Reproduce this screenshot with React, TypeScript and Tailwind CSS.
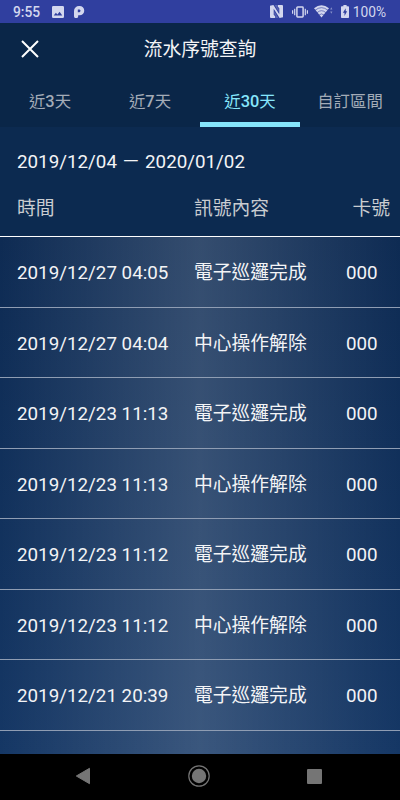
import { useState } from "react";

const tabs = [
  { before: "近", days: "3", after: "天" },
  { before: "近", days: "7", after: "天" },
  { before: "近", days: "30", after: "天" },
  { before: "自訂區間", days: "", after: "" },
];

const records = [
  { time: "2019/12/27 04:05", content: "電子巡邏完成", card: "000" },
  { time: "2019/12/27 04:04", content: "中心操作解除", card: "000" },
  { time: "2019/12/23 11:13", content: "電子巡邏完成", card: "000" },
  { time: "2019/12/23 11:13", content: "中心操作解除", card: "000" },
  { time: "2019/12/23 11:12", content: "電子巡邏完成", card: "000" },
  { time: "2019/12/23 11:12", content: "中心操作解除", card: "000" },
  { time: "2019/12/21 20:39", content: "電子巡邏完成", card: "000" },
];

function StatusBar() {
  return (
    <div className="flex h-[23px] shrink-0 items-center bg-[#303f9f] pt-[2px] pr-[14px] pl-[13px] text-[#d3d7ee]">
      <span className="w-[39px] text-[13.8px] leading-none font-medium">9:55</span>
      {/* picture */}
      <svg width="12" height="12" viewBox="0 0 12 12" className="-mt-[1px] mr-[10px]">
        <path fill="currentColor" fillRule="evenodd" d="M1.3 0h9.4A1.3 1.3 0 0 1 12 1.3v9.4a1.3 1.3 0 0 1-1.3 1.3H1.3A1.3 1.3 0 0 1 0 10.7V1.3A1.3 1.3 0 0 1 1.3 0ZM1.7 9.5h8.6L7.6 5.8 5.4 8.5 3.9 6.7Z" />
      </svg>
      {/* parking style app mark */}
      <svg width="11" height="12" viewBox="0 0 11 12" className="-mt-[1px]">
        <path fill="currentColor" fillRule="evenodd" d="M0 5A5 5 0 0 1 5 0H5.6A4.6 4.6 0 0 1 5.6 9.3H4.2V10.3A2.1 1.9 0 0 1 0 10.3ZM3.8 3.5V6.2H5.5A1.4 1.4 0 0 0 5.5 3.5Z" />
      </svg>
      <div className="ml-auto flex items-center">
        {/* nfc */}
        <svg width="13" height="13" viewBox="0 0 13 13" className="-mt-[1px] mr-[9px]">
          <path d="M0 .8L3.4 0 9.3 9.3V3.2L7.8 1.8V0H12A1 1 0 0 1 13 1V12.2L9.6 13 3.7 3.7V9.8L5.2 11.2V13H1A1 1 0 0 1 0 12Z" fill="currentColor" />
          <path d="M4.6 0H7.2V2.2L8.7 3.6V7ZM8.4 13H5.8V10.8L4.3 9.4V6Z" fill="currentColor" opacity=".25" />
        </svg>
        {/* vibrate */}
        <svg width="16" height="12" viewBox="0 0 16 12" fill="none" stroke="currentColor" className="-mt-[1px] mr-[6px]">
          <rect x="4.9" y="1" width="6.2" height="10" rx=".7" strokeWidth="1.5" />
          <path d="M2.7 2.8V9.2M.6 4.3V7.7M13.3 2.8V9.2M15.4 4.3V7.7" strokeWidth="1.2" />
        </svg>
        {/* wifi */}
        <svg width="19" height="13" viewBox="0 0 19 13" className="-mt-[1px] mr-[8px]">
          <path d="M0 3.2Q7.5-2.5 15 3.2L7.5 12.5Z" fill="currentColor" />
          <path d="M1 5.3Q7.5 0 14 5.3M3 7.7Q7.5 3.7 12 7.7M5 10Q7.5 7.8 10 10" fill="none" stroke="#303f9f" strokeWidth=".6" />
          <path d="M16.2 4.6L17.3 2.2L18.4 4.6ZM16.2 6.4L17.3 8.8L18.4 6.4Z" fill="currentColor" opacity=".55" />
        </svg>
        {/* battery */}
        <svg width="8" height="13" viewBox="0 0 8 13" className="-mt-[1px] mr-[4px]">
          <path d="M2.4 0H5.6V1.3H7.2A.8.8 0 0 1 8 2.1V12.2A.8.8 0 0 1 7.2 13H.8A.8.8 0 0 1 0 12.2V2.1A.8.8 0 0 1 .8 1.3H2.4Z" fill="currentColor" />
          <path d="M4.7 3.2L1.9 7.7H3.5V11L6.1 6.3H4.7Z" fill="#303f9f" />
        </svg>
        <span className="text-[13.8px] leading-none">100%</span>
      </div>
    </div>
  );
}

function NavigationBar() {
  return (
    <div className="flex h-[46px] shrink-0 items-center justify-between bg-black pr-[78px] pl-[75px] text-[#757575]">
      <svg width="16" height="18" viewBox="0 0 16 18" className="-mt-[3px]">
        <path d="M14.5 1.3V16.7L1.3 9Z" fill="currentColor" stroke="currentColor" strokeLinejoin="round" />
      </svg>
      <svg width="22" height="22" viewBox="0 0 22 22" className="-mt-[3px]">
        <circle cx="11" cy="11" r="10.2" fill="none" stroke="currentColor" strokeWidth="1.2" />
        <circle cx="11" cy="11" r="7.2" fill="currentColor" />
      </svg>
      <div className="-mt-[2px] size-[15px] rounded-[1px] bg-[#757575]" />
    </div>
  );
}

export default function App() {
  const [active, setActive] = useState(2);

  return (
    <div className="flex h-[800px] w-[400px] flex-col overflow-hidden bg-[#0c2a50] font-[Roboto,'Noto_Sans_CJK_TC',sans-serif] text-[18.8px] text-[#f3f4f6]">
      <StatusBar />

      <header className="grid h-[54px] shrink-0 grid-cols-[60px_1fr_60px] items-center bg-[#0a2648]">
        <button className="flex justify-center" aria-label="Close">
          <svg width="18" height="18" viewBox="0 0 18 18" className="mt-[-2px]">
            <path d="M1 1L17 17M17 1L1 17" stroke="#fff" strokeWidth="2" />
          </svg>
        </button>
        <h1 className="-mt-[1px] text-center leading-7">流水序號查詢</h1>
      </header>

      <nav className="grid h-[50px] shrink-0 grid-cols-4 bg-[#0a2648] text-[16.4px]">
        {tabs.map((tab, i) => (
          <button
            key={i}
            onClick={() => setActive(i)}
            className={`border-b-[5px] pt-[5px] leading-[40px] ${
              active === i ? "border-[#86e5fb] text-[#86e5fb]" : "border-transparent text-[#a3abb7]"
            }`}
          >
            {tab.before}
            <span className="font-medium">{tab.days}</span>
            {tab.after}
          </button>
        ))}
      </nav>

      <section className="h-[109px] shrink-0 px-[17px] pt-[21px]">
        <p className="leading-7">2019/12/04 － 2020/01/02</p>
        <div className="mt-[19px] grid grid-cols-[177px_1fr_auto] leading-7 text-[#c9ccd0]">
          <span>時間</span>
          <span>訊號內容</span>
          <span className="-mr-[7px]">卡號</span>
        </div>
      </section>

      <main className="min-h-0 flex-1 overflow-hidden border-t border-white bg-linear-to-b from-[#0e2b53] to-[#153765]">
        <div className="h-full bg-linear-to-r from-transparent via-white/16 to-transparent">
          {records.map((record, i) => (
            <div key={i} className="grid h-[70.55px] grid-cols-[177px_152px_1fr] items-center border-b border-[#8f9db3] pt-[3px] pl-[17px]">
              <span>{record.time}</span>
              <span>{record.content}</span>
              <span>{record.card}</span>
            </div>
          ))}
        </div>
      </main>

      <NavigationBar />
    </div>
  );
}
